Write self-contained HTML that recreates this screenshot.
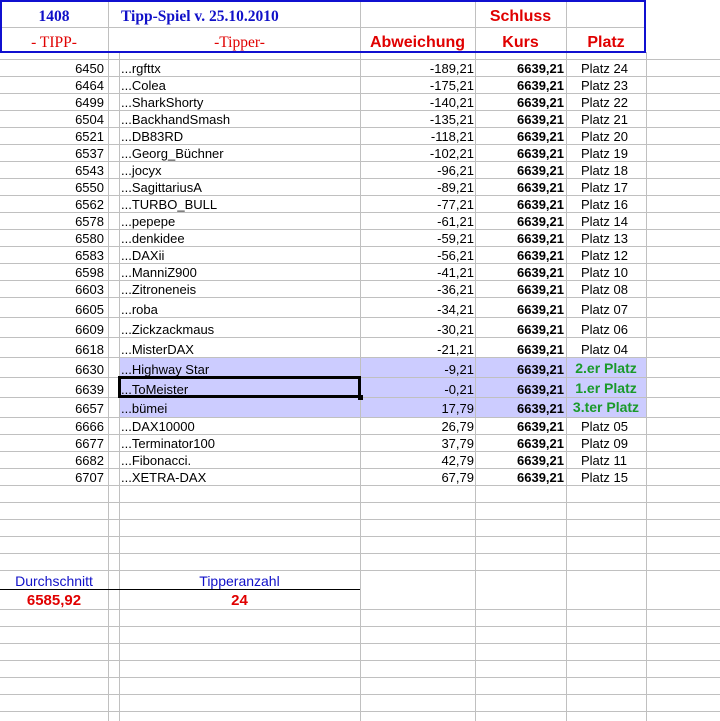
<!DOCTYPE html>
<html><head><meta charset="utf-8"><style>
body{margin:0;width:720px;height:721px;background:#fff;position:relative;overflow:hidden;font-family:"Liberation Sans",Arial,sans-serif;}
.h{position:absolute;left:0;width:720px;height:1px;background:#c0c0c0}
.v{position:absolute;width:1px;background:#c0c0c0}
.t{position:absolute;font-size:13px;line-height:16px;white-space:nowrap;color:#000}
.r{text-align:right}
.b{font-weight:bold}
.g{color:#1a9a2a;font-weight:bold;font-size:14px}
.red{color:#e00000}
.blu{color:#1010c8}
.sf{font-family:"Liberation Serif","Times New Roman",serif;font-weight:bold;font-size:15.5px}
.hs{font-weight:bold;font-size:16px}
</style></head><body>
<div style="position:absolute;left:119px;top:357px;width:527px;height:61px;background:#ccccff"></div>
<div id="g"></div>
<script>
var g='';
var ys=[];for(var k=0;k<=14;k++)ys.push(59+17*k);
[317,337,357,377,397,417,434,451,468,485,502,519,536,553,570,609,626,643,660,677,694,711].forEach(function(y){ys.push(y)});
ys.forEach(function(y){g+='<div class="h" style="top:'+y+'px"></div>'});
[108,119,360,475,566,646].forEach(function(x){g+='<div class="v" style="left:'+x+'px;top:52px;height:669px"></div>'});
[108,360,475,566].forEach(function(x){g+='<div class="v" style="left:'+x+'px;top:0;height:52px"></div>'});
g+='<div class="h" style="top:27px;width:645px"></div>';
var rows=[["6450","rgfttx","-189,21","Platz 24"],["6464","Colea","-175,21","Platz 23"],["6499","SharkShorty","-140,21","Platz 22"],["6504","BackhandSmash","-135,21","Platz 21"],["6521","DB83RD","-118,21","Platz 20"],["6537","Georg_Büchner","-102,21","Platz 19"],["6543","jocyx","-96,21","Platz 18"],["6550","SagittariusA","-89,21","Platz 17"],["6562","TURBO_BULL","-77,21","Platz 16"],["6578","pepepe","-61,21","Platz 14"],["6580","denkidee","-59,21","Platz 13"],["6583","DAXii","-56,21","Platz 12"],["6598","ManniZ900","-41,21","Platz 10"],["6603","Zitroneneis","-36,21","Platz 08"],["6605","roba","-34,21","Platz 07"],["6609","Zickzackmaus","-30,21","Platz 06"],["6618","MisterDAX","-21,21","Platz 04"],["6630","Highway Star","-9,21","2.er Platz"],["6639","ToMeister","-0,21","1.er Platz"],["6657","bümei","17,79","3.ter Platz"],["6666","DAX10000","26,79","Platz 05"],["6677","Terminator100","37,79","Platz 09"],["6682","Fibonacci.","42,79","Platz 11"],["6707","XETRA-DAX","67,79","Platz 15"]];
var cy=[68,85,102,119,136,153,170,187,204,221,238,255,272,289,309,329,349,369,389,408,426,443,460,477];
rows.forEach(function(r,i){var t=cy[i]-7;
g+='<div class="t r" style="left:40px;width:64px;top:'+t+'px">'+r[0]+'</div>';
g+='<div class="t" style="left:121px;top:'+t+'px">...'+r[1]+'</div>';
g+='<div class="t r" style="left:380px;width:94px;top:'+t+'px">'+r[2]+'</div>';
g+='<div class="t r b" style="left:480px;width:84px;top:'+t+'px">6639,21</div>';
if(i>=17&&i<=19)g+='<div class="t g" style="left:567px;width:78px;text-align:center;top:'+(t-2)+'px">'+r[3]+'</div>';
else g+='<div class="t" style="left:581px;top:'+t+'px">'+r[3]+'</div>';});
document.getElementById('g').outerHTML=g;
</script>
<div style="position:absolute;left:0;top:0;width:642px;height:49px;border:2px solid #1010d0"></div>
<div class="t sf blu" style="left:0;width:108px;text-align:center;top:9px">1408</div>
<div class="t sf blu" style="left:121px;top:9px">Tipp-Spiel v. 25.10.2010</div>
<div class="t hs red" style="left:475px;width:91px;text-align:center;top:9px">Schluss</div>
<div class="t sf red" style="left:0;width:108px;text-align:center;top:35px;font-weight:normal">- TIPP-</div>
<div class="t sf red" style="left:119px;width:241px;text-align:center;top:35px;font-weight:normal">-Tipper-</div>
<div class="t hs red" style="left:360px;width:115px;text-align:center;top:35px">Abweichung</div>
<div class="t hs red" style="left:475px;width:91px;text-align:center;top:35px">Kurs</div>
<div class="t hs red" style="left:566px;width:80px;text-align:center;top:35px">Platz</div>
<div style="position:absolute;left:118px;top:376px;width:237px;height:16px;border:3px solid #000"></div>
<div style="position:absolute;left:358px;top:395px;width:5px;height:5px;background:#000"></div>
<div style="position:absolute;left:0;top:589px;width:360px;height:1px;background:#000"></div>
<div class="t blu" style="left:0;width:108px;text-align:center;top:573px;font-size:14px">Durchschnitt</div>
<div class="t blu" style="left:119px;width:241px;text-align:center;top:573px;font-size:14px">Tipperanzahl</div>
<div class="t red b" style="left:0;width:108px;text-align:center;top:593px;font-size:15px">6585,92</div>
<div class="t red b" style="left:119px;width:241px;text-align:center;top:593px;font-size:15px">24</div>
</body></html>
